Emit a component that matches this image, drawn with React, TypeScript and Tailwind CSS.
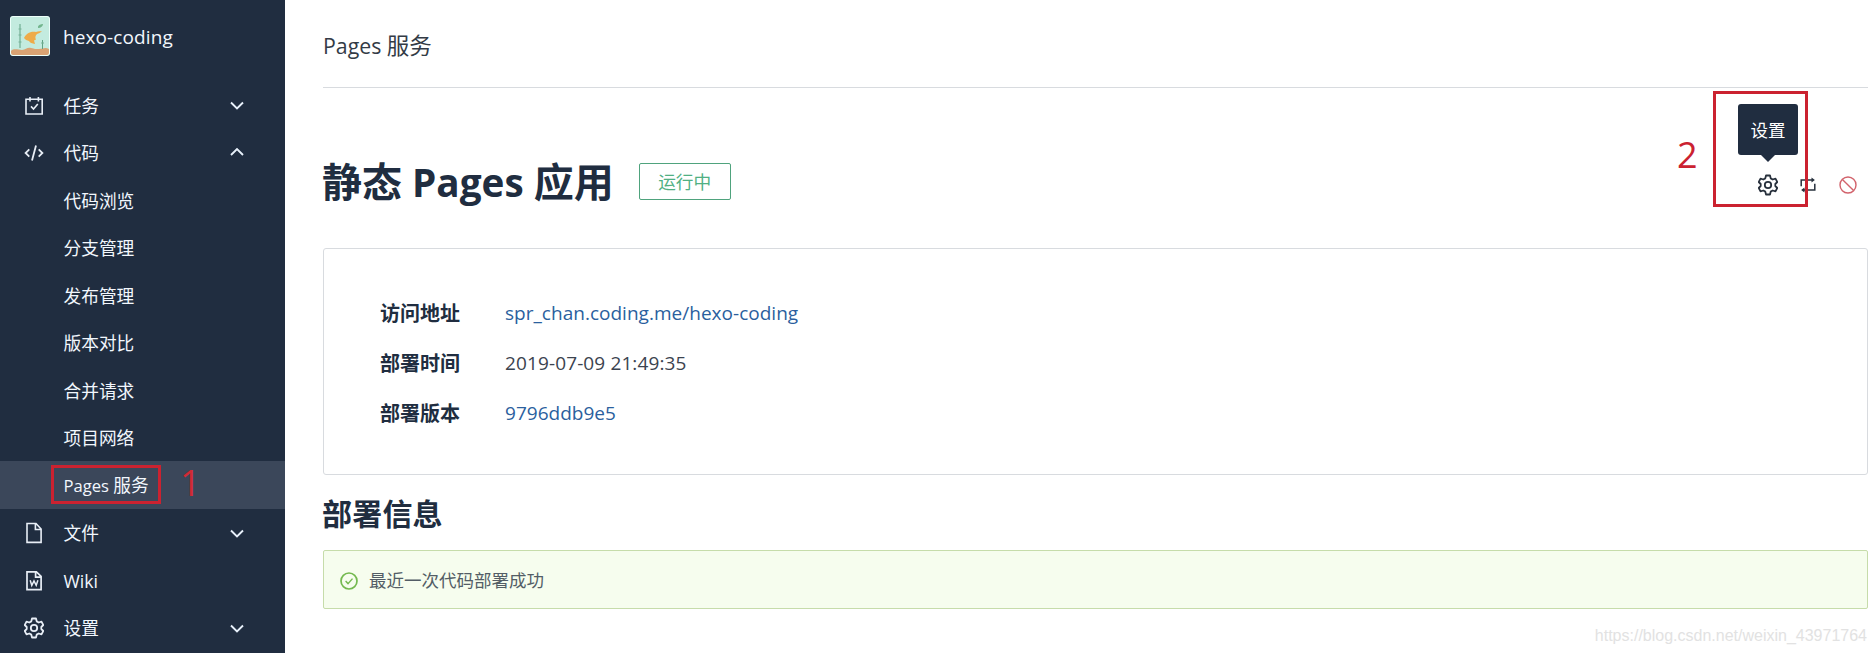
import React from "react";

type IconProps = { className?: string };

const Chevron = ({ up }: { up?: boolean }) => (
  <svg className={up ? "-translate-y-[1.5px]" : ""} width="14" height="9" viewBox="0 0 14 9" fill="none" stroke="#e8f1fb" strokeWidth="1.9">
    <path d={up ? "M1 7.5 7 1.5l6 6" : "M1 1.5l6 6 6-6"} />
  </svg>
);

const TaskIcon = () => (
  <svg width="20" height="20" viewBox="0 0 20 20" fill="none" stroke="#e8eef6" strokeWidth="1.6">
    <path d="M2 3.2h16.200v14.800H2zM6 1v4.400M14.400 1v4.400M7 10.400l2.500 2.600 4.300-5" />
  </svg>
);

const CodeIcon = () => (
  <svg width="20" height="20" viewBox="0 0 20 20" fill="none" stroke="#e8eef6" strokeWidth="1.8">
    <path d="M5.300 6.300 1.600 10l3.700 3.700M14.700 6.300l3.700 3.700-3.700 3.700M12 2.600 8 17.400" />
  </svg>
);

const FileIcon = () => (
  <svg width="20" height="22" viewBox="0 0 20 22" fill="none" stroke="#e8eef6" strokeWidth="1.6">
    <path d="M3 1.5h9L17.1 7v13.4H3zM11.4 1.5v6h5.7" />
  </svg>
);

const WikiIcon = () => (
  <svg width="20" height="22" viewBox="0 0 20 22" fill="none" stroke="#e8eef6" strokeWidth="1.7">
    <path d="M3 1.900h9.400l4.700 4.500v13.300H3zM11.600 1.900v5.200h5.500" />
    <path d="M6.200 10.300 7.800 15.400l2.200-4.400 2.200 4.400 1.700-5.100" strokeWidth="1.500" />
  </svg>
);

const GearIcon = ({ className }: IconProps) => (
  <svg className={className} width="20" height="22" viewBox="0 0 20 22" fill="none" stroke="currentColor" strokeWidth="1.8" strokeLinejoin="round">
    <path d="M8 1.500h4l.700 2.900 2 1.100 2.800-.900 1.800 3.400-2 2v2l2 2-1.800 3.400-2.800-.900-2 1.100-.700 2.900H8l-.700-2.900-2-1.100-2.800.900L.700 14l2-2v-2l-2-2 1.800-3.400 2.800.900 2-1.100z" />
    <circle cx="10" cy="11" r="3.200" />
  </svg>
);

const SwapIcon = () => (
  <svg className="-translate-x-px" width="16" height="16" viewBox="0 0 16 16" fill="none" stroke="#27303c" strokeWidth="1.5">
    <path d="M1.200 9.300V3h11M14.800 6.700V13H4" />
    <path d="M11.500.400 14.900 3l-3.400 2.600zM4.500 10.400 1.100 13l3.400 2.600z" fill="#27303c" stroke="none" />
  </svg>
);

const BanIcon = () => (
  <svg width="18" height="18" viewBox="0 0 18 18" fill="none" stroke="#d2636c" strokeWidth="1.4">
    <circle cx="9" cy="9" r="8" />
    <path d="M3.400 3.400l11.200 11.200" />
  </svg>
);

const CheckIcon = () => (
  <svg className="translate-y-px" width="18" height="18" viewBox="0 0 18 18" fill="none" stroke="#74b94f" strokeWidth="1.7">
    <circle cx="9" cy="9" r="8" />
    <path d="M5.600 9.100l2.400 2.500 4.500-5" strokeWidth="1.400" />
  </svg>
);

const Logo = () => (
  <svg width="40" height="40" viewBox="0 0 40 40" className="rounded-[3px]">
    <rect width="40" height="40" fill="#c3ebdf" />
    <path d="M1 35c3-3 7-1 11-1s5-3 9-2 4 1 8 1 6-2 10 0v6H1z" fill="#d9a273" />
    <path d="M10 8v24M32.500 24v9" stroke="#61a183" strokeWidth="1" />
    <path d="M8.500 13h3M8.500 19h3M8.500 26h3M31 27h3" stroke="#76b197" strokeWidth="1" />
    <path d="M14 22c2-4 6-7 12-6 2-1 4-1 6-.500-2 1-3 2-5 2.500-2 2-2 4-1 5.500l-2 1 1 3.500c-3-.500-5-1-6-3-2-.500-4-1.500-5-3z" fill="#eeab49" />
    <path d="M28 11c0-2 3-3 5-3 0 2-2 4-5 4" fill="#72b58d" />
    <rect x=".5" y=".5" width="39" height="39" rx="2.500" fill="none" stroke="#edfffa" />
  </svg>
);

const SubItem = ({ label }: { label: string }) => (
  <li className="flex h-[47.5px] items-center pl-[63.5px] pt-[1.5px]">{label}</li>
);

const MenuItem = ({ icon, label, chevron }: { icon: React.ReactNode; label: string; chevron?: "up" | "down" }) => (
  <li className="flex h-[47.5px] items-center pl-6 pr-[41.5px] pt-[1.5px]">
    <span className="flex w-[39.5px] items-center text-[#e8eef6]">{icon}</span>
    <span className="flex-1">{label}</span>
    {chevron && <Chevron up={chevron === "up"} />}
  </li>
);

const DetailRow = ({ label, children }: { label: string; children: React.ReactNode }) => (
  <div className="flex h-[50px] items-center">
    <dt className="w-[125px] pt-px text-[20px] font-bold text-[#202d40]">{label}</dt>
    <dd className="text-[19px] tracking-[0.02px]">{children}</dd>
  </div>
);

export default function App() {
  return (
    <div className="relative flex h-[653px] w-[1876px] overflow-hidden bg-white font-['Open_Sans','Noto_Sans_CJK_SC',sans-serif] text-[#3b434f]">
      <aside className="h-full w-[285px] shrink-0 bg-[#202d40] text-[17.7px] leading-6 text-[#f2f7fd]">
        <header className="flex h-[81px] items-start gap-[13px] pl-2.5 pt-4">
          <Logo />
          <span className="flex h-[41px] items-center text-[19px] tracking-[0.1px]">hexo-coding</span>
        </header>
        <ul>
          <MenuItem icon={<TaskIcon />} label="任务" chevron="down" />
          <MenuItem icon={<CodeIcon />} label="代码" chevron="up" />
          <SubItem label="代码浏览" />
          <SubItem label="分支管理" />
          <SubItem label="发布管理" />
          <SubItem label="版本对比" />
          <SubItem label="合并请求" />
          <SubItem label="项目网络" />
          <li className="relative flex h-[47.5px] items-center bg-[#3b475a] pl-[63.5px] pt-[1.5px]">
            <span className="whitespace-pre"><span className="text-[16.6px]">Pages </span>服务</span>
            <span className="absolute left-[51px] top-[4px] h-[39px] w-[110px] border-[3px] border-[#cb2230]" />
            <span className="absolute left-[180px] top-[2px] font-['Open_Sans',sans-serif] text-[36px] leading-[40px] text-[#d12a35]">1</span>
          </li>
          <MenuItem icon={<FileIcon />} label="文件" chevron="down" />
          <MenuItem icon={<WikiIcon />} label="Wiki" />
          <MenuItem icon={<GearIcon />} label="设置" chevron="down" />
        </ul>
      </aside>

      <main className="flex flex-1 flex-col pl-[38px] pr-2">
        <header className="flex h-[88px] items-center border-b border-[#d8dbdf] pt-1 text-[22.5px] text-[#333b46]">
          <span className="whitespace-pre"><span className="text-[21.3px]">Pages </span>服务</span>
        </header>

        <section className="flex h-[160px] items-center pt-[26px]">
          <h1 className="-ml-px whitespace-pre pt-0.5 text-[40px] font-bold leading-[60px] text-[#202d40]">
            静态<span className="text-[38.700px]"> Pages </span>应用
          </h1>
          <span className="ml-[25px] flex h-[37px] w-[92px] items-center justify-center rounded-[2px] border border-[#4fa37d] pt-[3px] text-[17.7px] text-[#50b083]">
            运行中
          </span>
          <div className="relative ml-auto flex items-center gap-[22px] pr-[11px] pt-2 text-[#27303c]">
            <GearIcon className="-translate-x-px" />
            <SwapIcon />
            <BanIcon />
            <div className="absolute -left-[21px] -top-[62px] flex h-[51px] w-[60px] items-center justify-center rounded-[3px] bg-[#202d40] pt-0.5 text-[17.5px] text-white">
              设置
              <svg className="absolute left-[22px] top-[50px]" width="16" height="8" viewBox="0 0 16 8">
                <path d="M0 0h16L8 8z" fill="#202d40" />
              </svg>
            </div>
          </div>
        </section>

        <dl className="flex h-[227px] flex-col justify-center rounded-[3px] border border-[#d8dbdf] pl-14 pt-[3px]">
          <DetailRow label="访问地址">
            <span className="text-[#2b5f9e]">spr_chan.coding.me/hexo-coding</span>
          </DetailRow>
          <DetailRow label="部署时间"><span className="tracking-[0.12px]">2019-07-09 21:49:35</span></DetailRow>
          <DetailRow label="部署版本">
            <span className="text-[#2b5f9e]">9796ddb9e5</span>
          </DetailRow>
        </dl>

        <h2 className="-ml-px flex h-[75px] items-center pt-px text-[30px] font-bold tracking-[0.2px] text-[#202d40]">部署信息</h2>

        <div className="flex h-[59px] items-center gap-[11px] rounded-[2px] border border-[#c6dcaa] bg-[#f6fdee] pl-4 text-[17.5px] text-[#535d66]">
          <CheckIcon />
          <span className="translate-y-px">最近一次代码部署成功</span>
        </div>
      </main>

      <span className="absolute left-[1713px] top-[91px] h-[116px] w-[95px] border-[3px] border-[#cb2230]" />
      <span className="absolute left-[1677px] top-[135px] font-['Open_Sans',sans-serif] text-[36px] leading-[40px] text-[#cb2230]">2</span>
      <span className="absolute right-[9px] top-[626px] font-['Liberation_Sans',sans-serif] text-[16px] leading-5 text-[#e2e2e2]">
        https://blog.csdn.net/weixin_43971764
      </span>
    </div>
  );
}
